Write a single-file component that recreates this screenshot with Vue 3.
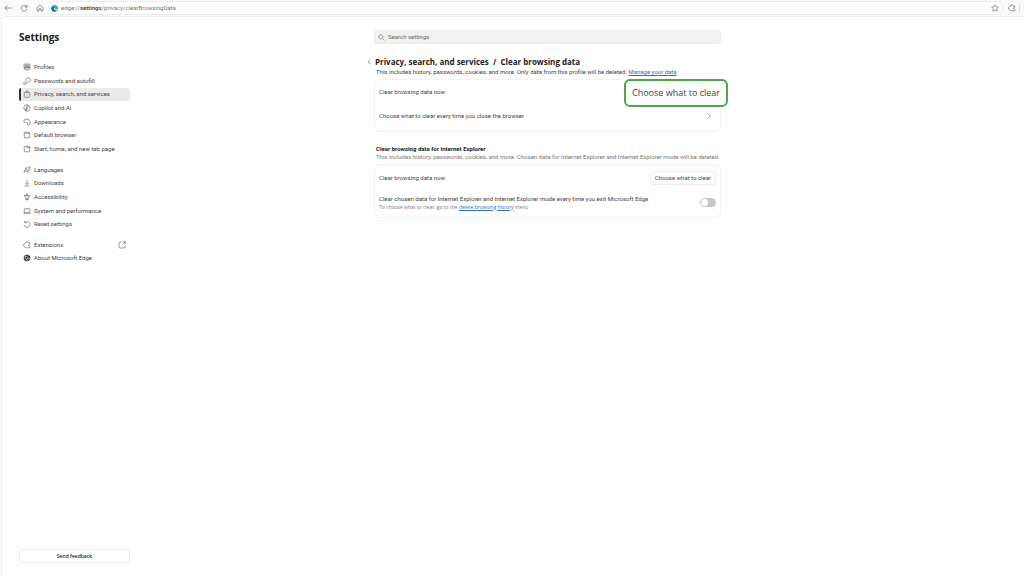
<script setup>
import { ref } from 'vue'

const search = ref('')
const address = ref('settings')
const clearOnExit = ref(false)

const groups = [
  {
    name: 'main',
    items: [
      { icon: 'profiles', label: 'Profiles' },
      { icon: 'key', label: 'Passwords and autofill' },
      { icon: 'lock', label: 'Privacy, search, and services', active: true },
      { icon: 'copilot', label: 'Copilot and AI' },
      { icon: 'palette', label: 'Appearance' },
      { icon: 'browser', label: 'Default browser' },
      { icon: 'tab', label: 'Start, home, and new tab page' },
    ],
  },
  {
    name: 'system',
    items: [
      { icon: 'language', label: 'Languages' },
      { icon: 'download', label: 'Downloads' },
      { icon: 'person', label: 'Accessibility' },
      { icon: 'laptop', label: 'System and performance' },
      { icon: 'reset', label: 'Reset settings' },
    ],
  },
  {
    name: 'about',
    items: [
      { icon: 'puzzle', label: 'Extensions', external: true },
      { icon: 'edge', label: 'About Microsoft Edge' },
    ],
  },
]

const icons = {
  profiles: 'M2 3.500Q2 2 3.500 2H12.500Q14 2 14 3.500V9Q14 14 8 14T2 9ZM2 6H14M2 9H14M6 2V13M10 2V13M8 6V9',
  key: 'M10 1.500A4.500 4.500 0 1 1 8.700 10L7.500 11H6V12.500H4.500V14.500H1.500V11.500L6 7A4.500 4.500 0 0 1 10 1.500ZM11.300 4.600H11.500',
  lock: 'M4 5H12Q13.500 5 13.500 6.500V13Q13.500 14.500 12 14.500H4Q2.500 14.500 2.500 13V6.500Q2.500 5 4 5ZM5.500 5V4A2.500 2.500 0 0 1 10.500 4V5M8 9V10.500',
  copilot: 'M5 2H10Q11.500 2 12 4L12.500 5.500Q15 5.500 14.500 8L13.500 11.500Q13 14 11 14H6Q4.500 14 4 12L3.500 10.500Q1 10.500 1.500 8L2.500 4.500Q3 2 5 2ZM10 2Q8.500 2 8 4L6 12Q5.500 14 4.500 13M12.500 5.500H10Q9 5.500 8.500 7L7 13.500M3.500 10.500H6',
  palette: 'M2 8.500Q0 3 6 1.800Q13 1 14.500 8Q15 13 11 14Q8.500 14.500 9 11.500Q9 9 7 9Q5 9 4 9.500Q2.500 9.700 2 8.500ZM5 5.200H5.200M9 4.500H9.200M12 8H12.200',
  browser: 'M4 2.500H12Q13.500 2.500 13.500 4V12Q13.500 13.500 12 13.500H4Q2.500 13.500 2.500 12V4Q2.500 2.500 4 2.500ZM2.500 4.500H13.500',
  tab: 'M4 2.500H12Q13.500 2.500 13.500 4V12Q13.500 13.500 12 13.500H4Q2.500 13.500 2.500 12V4Q2.500 2.500 4 2.500ZM8 2.500V5H13.500',
  language: 'M1.500 14L6 3L10.500 14M3 10.500H9M9 3Q10 1 12 2Q14 3 12 5Q11 6 11 7M13 1Q15 4 14 7M10 9H14',
  download: 'M8 1.500V10.500M4.500 7.500L8 11L11.500 7.500M3 14H13',
  person: 'M8 1.500A1.700 1.700 0 1 1 7.900 1.500M2.500 4.500Q8 7 13.500 4.500V6.500L10.500 8V14H9L8 10.500L7 14H5.500V8L2.500 6.500Z',
  laptop: 'M3.500 3.500H12.500Q13.500 3.500 13.500 4.500V11.500H2.500V4.500Q2.500 3.500 3.500 3.500ZM1 12.500H15',
  reset: 'M3.500 2V5.500H7M3.700 5.300A5.800 5.800 0 1 1 2.300 9.500',
  puzzle: 'M5 4Q5.500 1.500 8 1.500T11 4H13.500V6.500Q11 6.500 11 8.500T13.500 10.500V13.500H6Q3.500 13.500 3.500 11Q1 10.500 1 8T3.500 5.500Q3.500 4 5 4Z',
}
</script>

<template>
  <div class="window">
    <header class="toolbar">
      <button class="tool" aria-label="Back">
        <svg viewBox="0 0 16 16"><path d="M15 8H1.500M7 2.500L1.500 8L7 13.500" /></svg>
      </button>
      <button class="tool" aria-label="Refresh">
        <svg viewBox="0 0 16 16"><path d="M13.800 7A6 6 0 1 0 14 9M14 1.500V6H9.500" /></svg>
      </button>
      <button class="tool" aria-label="Home">
        <svg viewBox="0 0 16 16"><path d="M2 7L8 1.500L14 7V14H10V9.500H6V14H2Z" /></svg>
      </button>
      <div class="address">
        <svg class="edge-logo" viewBox="0 0 16 16">
          <circle cx="8" cy="8" r="7.500" fill="#1673c8" />
          <path d="M1 6Q3 0 9 .6Q15.500 1.500 15.500 7Q15 10.500 11.500 10.500Q9 10.500 9.500 9Q10.500 5.500 6.500 4.800Q3 4.500 1 6Z" fill="#43bd75" />
          <path d="M6 8Q6 12.500 12.500 12.500Q10 15.500 7 14.500Q3 13 4 9Q4.500 6 7 6Q6 7 6 8Z" fill="#1557a5" />
          <path d="M9.500 9Q9 10.500 11.500 10.500L15.500 9.500L13.500 12.500Q7 12.500 6.800 9Q7 6.500 9.500 7Z" fill="#fff" />
        </svg>
        <span class="url">edge://<b>{{ address }}</b>/privacy/clearBrowsingData</span>
        <button class="tool star" aria-label="Add to favorites">
          <svg viewBox="0 0 16 16"><path d="M8 1.500L10 5.900L14.700 6.400L11.200 9.600L12.200 14.300L8 11.900L3.800 14.300L4.800 9.600L1.300 6.400L6 5.900Z" /></svg>
        </button>
      </div>
      <button class="tool extension" aria-label="Extensions">
        <svg viewBox="0 0 16 16"><path :d="icons.puzzle" /></svg>
      </button>
      <span class="divider"></span>
    </header>

    <div class="page">
      <aside class="sidebar">
        <h1>Settings</h1>
        <nav aria-label="Settings">
          <ul v-for="group in groups" :key="group.name" :class="group.name">
            <li v-for="item in group.items" :key="item.label">
              <a href="#" :class="{ active: item.active }">
                <svg v-if="item.icon === 'edge'" class="icon" viewBox="0 0 16 16">
                  <circle class="solid" cx="8" cy="8" r="6" />
                  <path class="cut" d="M3 6Q7 3 9.500 6Q10 8 9 9Q10 11 14 9M5 7Q4 11 10 13" />
                </svg>
                <svg v-else class="icon" viewBox="0 0 16 16"><path :d="icons[item.icon]" /></svg>
                <span>{{ item.label }}</span>
                <svg v-if="item.external" class="icon external" viewBox="0 0 16 16">
                  <path d="M7 2H4Q2 2 2 4V12Q2 14 4 14H12Q14 14 14 12V9M9.500 1.500H14.500V6.500M14.500 1.500L9 7" />
                </svg>
              </a>
            </li>
          </ul>
        </nav>
        <button class="feedback">Send feedback</button>
      </aside>

      <main>
        <label class="search">
          <svg class="icon" viewBox="0 0 16 16"><path d="M10.300 10.300L14.500 14.500M6.500 1.500A5 5 0 1 1 6.400 1.500" /></svg>
          <input v-model="search" type="search" placeholder="Search settings" aria-label="Search settings" />
        </label>

        <section class="current">
          <div class="heading">
            <button class="tool back" aria-label="Back to privacy">
              <svg viewBox="0 0 16 16"><path d="M10 4L6 8L10 12" /></svg>
            </button>
            <h2>Privacy, search, and services&nbsp; /&nbsp; Clear browsing data</h2>
          </div>
          <p class="intro">
            This includes history, passwords, cookies, and more. Only data from this profile will be deleted.
            <a href="#">Manage your data</a>
          </p>
          <div class="card">
            <div class="row"><span>Clear browsing data now</span></div>
            <div class="row">
              <span>Choose what to clear every time you close the browser</span>
              <button class="tool chevron" aria-label="Choose what to clear on close">
                <svg viewBox="0 0 16 16"><path d="M5.500 3L10.500 8L5.500 13" /></svg>
              </button>
            </div>
            <button class="callout">Choose what to clear</button>
          </div>
        </section>

        <section class="explorer">
          <h3>Clear browsing data for Internet Explorer</h3>
          <p class="intro light">
            This includes history, passwords, cookies, and more. Chosen data for Internet Explorer and Internet Explorer mode will be deleted.
          </p>
          <div class="card">
            <div class="row">
              <span>Clear browsing data now</span>
              <button class="choose">Choose what to clear</button>
            </div>
            <div class="row">
              <div>
                <label for="exit-toggle">Clear chosen data for Internet Explorer and Internet Explorer mode every time you exit Microsoft Edge</label>
                <p class="hint">To choose what to clear, go to the <a href="#">delete browsing history</a> menu</p>
              </div>
              <input id="exit-toggle" v-model="clearOnExit" class="toggle" type="checkbox" role="switch" />
            </div>
          </div>
        </section>
      </main>
    </div>
  </div>
</template>

<style>
body {
  background: #fafafa;
}
</style>

<style scoped>
* {
  box-sizing: border-box;
}
.window {
  display: flex;
  flex-direction: column;
  min-height: 100vh;
  overflow: hidden;
  font: 6px/8px Roboto, "Noto Sans", sans-serif;
  color: #444;
}
h1, h2, h3, p, ul {
  margin: 0;
  padding: 0;
}
button, input {
  font: inherit;
  color: inherit;
}
a {
  color: #326bd1;
}
svg {
  display: block;
  width: 8px;
  height: 8px;
  flex: none;
  fill: none;
  stroke: #666;
  stroke-width: 1.3;
  stroke-linejoin: round;
}
.tool {
  flex: none;
  padding: 0;
  border: 0;
  background: none;
}
.toolbar {
  display: flex;
  align-items: center;
  gap: 8px;
  height: 16px;
  padding-left: 4px;
}
.address {
  flex: 1;
  display: flex;
  align-items: center;
  gap: 3px;
  height: 14px;
  margin-left: -4px;
  padding: 0 3px 0 2px;
  border: 1px solid #ececec;
  border-radius: 7px;
  background: #fff;
}
.edge-logo {
  width: 7px;
  height: 7px;
  stroke: none;
}
.url {
  flex: 1;
  color: #777;
}
.url b {
  font-weight: 500;
  color: #333;
}
.extension {
  margin-left: -3px;
}
.divider {
  width: 5px;
  height: 7px;
  margin-left: -5px;
  border-left: 1px solid #ddd;
}
.page {
  flex: 1;
  display: flex;
  margin-left: 1px;
  border: 1px solid #eee;
  border-right: 0;
  border-bottom: 0;
  border-radius: 4px 0 0 4px;
  background: #fff;
}
.sidebar {
  display: flex;
  flex-direction: column;
  flex: none;
  width: 128px;
  padding: 13px 0 13px 17px;
}
h1 {
  margin-bottom: 16px;
  font: 700 10px/14px "Open Sans", "Noto Sans", sans-serif;
  color: #222;
}
nav {
  display: flex;
  flex-direction: column;
  gap: 7px;
}
ul {
  display: flex;
  flex-direction: column;
  list-style: none;
}
.main {
  min-height: 96px;
}
.system {
  min-height: 68px;
}
.about {
  min-height: 27px;
}
li {
  flex: 1;
  display: flex;
  align-items: center;
}
nav a {
  flex: 1;
  display: flex;
  align-items: center;
  gap: 3px;
  height: 13px;
  padding: 0 4px 0 2px;
  border-left: 2px solid transparent;
  border-radius: 3px;
  color: inherit;
  text-decoration: none;
}
nav a.active {
  border-left-color: #333;
  border-radius: 2px 3px 3px 2px;
  background: #ebebeb;
}
.external {
  margin-left: auto;
}
.solid {
  fill: #333;
  stroke: #333;
}
.cut {
  stroke: #fff;
}
.feedback {
  height: 14px;
  margin-top: auto;
  padding: 0;
  border: 1px solid #ececec;
  border-radius: 3px;
  background: #fff;
  font: 600 5px/8px "Open Sans", "Noto Sans", sans-serif;
  color: #222;
}
main {
  flex: 1;
  max-width: 591px;
  padding: 13px 0 0 244px;
}
.search {
  display: flex;
  align-items: center;
  gap: 3px;
  height: 14px;
  padding: 0 3px;
  border: 1px solid #ececec;
  border-radius: 3px;
  background: #f1f1f1;
}
.search input {
  flex: 1;
  padding: 0;
  border: 0;
  outline: 0;
  background: none;
}
.search .icon {
  width: 7px;
  height: 7px;
}
.search input::placeholder {
  color: #666;
  opacity: 1;
}
.heading {
  display: flex;
  align-items: center;
  gap: 2px;
  margin: 12px 0 0 -9px;
}
h2 {
  font: 700 8px/12px "Open Sans", "Noto Sans", sans-serif;
  color: #222;
  white-space: nowrap;
}
.intro {
  margin-left: 2px;
  white-space: nowrap;
}
.light, .hint {
  color: #777;
}
.card {
  position: relative;
  display: flex;
  flex-direction: column;
  margin-top: 3px;
  padding: 0 4px 3px;
  border: 1px solid #f3f3f3;
  border-radius: 6px;
}
.row {
  display: flex;
  align-items: center;
  justify-content: space-between;
  min-height: 24px;
  white-space: nowrap;
}
.chevron {
  margin-right: 3px;
}
.callout {
  position: absolute;
  top: -1px;
  right: -8px;
  height: 28px;
  padding: 0 6px;
  border: 2px solid #4ca847;
  border-radius: 6px;
  background: #fff;
  font: 9px/12px "Open Sans", "Noto Sans", sans-serif;
}
.explorer {
  margin-top: 12px;
}
.explorer .card {
  padding-bottom: 2px;
}
.explorer .row {
  min-height: 25px;
}
h3 {
  margin-left: 2px;
  font-size: 6px;
  line-height: 9px;
  color: #222;
}
.choose {
  height: 14px;
  padding: 0 4px;
  border: 1px solid #ececec;
  border-radius: 3px;
  background: #fff;
}
label {
  display: block;
}
.hint {
  font: 5px/8px "Open Sans", "Noto Sans", sans-serif;
}
.toggle {
  flex: none;
  width: 16px;
  height: 9px;
  margin: 0;
  padding: 1px;
  border-radius: 5px;
  background: #c6c6c6;
  appearance: none;
}
.toggle::before {
  content: "";
  display: block;
  width: 7px;
  height: 7px;
  border-radius: 50%;
  background: #fff;
}
.toggle:checked {
  padding-left: 8px;
  background: #326bd1;
}
</style>
